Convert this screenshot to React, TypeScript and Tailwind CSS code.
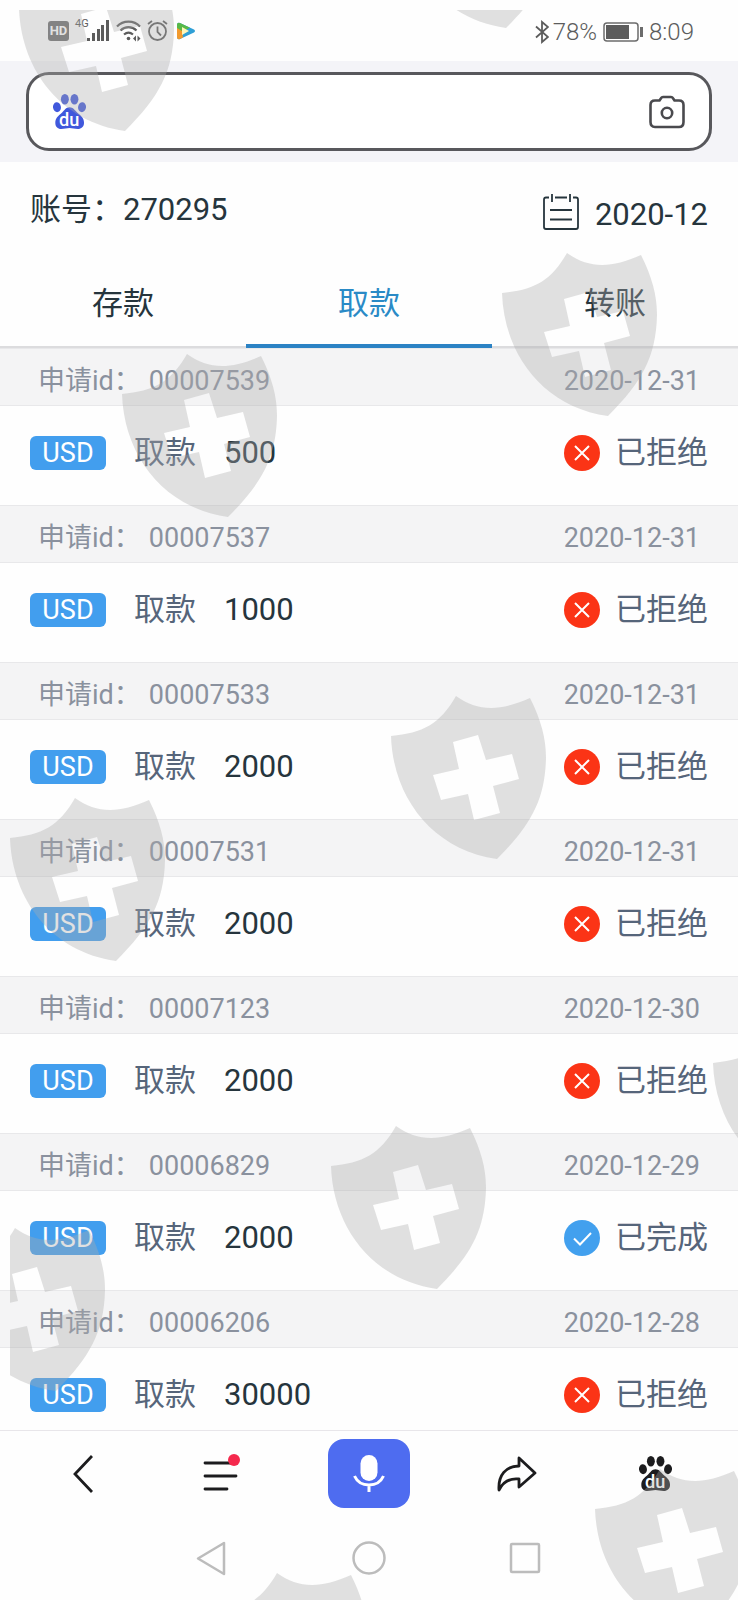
import { useState } from 'react';

type Status = 'rejected' | 'done';

type Application = {
  id: string;
  date: string;
  currency: string;
  amount: number;
  status: Status;
};

const applications: Application[] = [
  { id: '00007539', date: '2020-12-31', currency: 'USD', amount: 500, status: 'rejected' },
  { id: '00007537', date: '2020-12-31', currency: 'USD', amount: 1000, status: 'rejected' },
  { id: '00007533', date: '2020-12-31', currency: 'USD', amount: 2000, status: 'rejected' },
  { id: '00007531', date: '2020-12-31', currency: 'USD', amount: 2000, status: 'rejected' },
  { id: '00007123', date: '2020-12-30', currency: 'USD', amount: 2000, status: 'rejected' },
  { id: '00006829', date: '2020-12-29', currency: 'USD', amount: 2000, status: 'done' },
  { id: '00006206', date: '2020-12-28', currency: 'USD', amount: 30000, status: 'rejected' },
];

const tabs = ['存款', '取款', '转账'];

const shields = [
  [19, -32],
  [400, -135],
  [502, 253],
  [122, 354],
  [391, 696],
  [10, 798],
  [331, 1126],
  [713, 1023],
  [-50, 1228],
  [595, 1469],
  [212, 1573],
];

function Watermark() {
  return (
    <svg className="pointer-events-none absolute inset-0 h-full w-full" aria-hidden="true">
      <defs>
        <clipPath id="inner">
          <rect x="10" y="10" width="100%" height="100%" />
        </clipPath>
      </defs>
      <g clipPath="url(#inner)" fill="#acacac" fillOpacity="0.36" fillRule="evenodd">
        {shields.map(([x, y]) => (
          <path
            key={`${x},${y}`}
            transform={`translate(${x} ${y})`}
            d="M0 40 C32 37 49 28 65 0 C86 15 108 16 139 2 C150 24 155 42 155 62 C154 104 140 129 106 163 C42 154 2 102 0 40 Z M62 46 L68 73 L42 79 L50 104 L77 98 L83 124 L109 117 L102 90 L128 83 L121 58 L95 64 L87 39 Z"
          />
        ))}
      </g>
    </svg>
  );
}

function Paw({ className }: { className: string }) {
  return (
    <svg viewBox="0 0 100 106" className={className} fill="currentColor" aria-hidden="true">
      <ellipse cx="12" cy="40" rx="12" ry="15" transform="rotate(-8 12 40)" />
      <ellipse cx="36" cy="16" rx="12" ry="16" />
      <ellipse cx="65" cy="16" rx="12" ry="16" />
      <ellipse cx="88" cy="40" rx="12" ry="15" transform="rotate(8 88 40)" />
      <path d="M50 40 C61 40 66 49 74 57 C86 67 94 74 94 87 C94 99 86 106 75 106 C65 106 58 103 50 103 C42 103 35 106 25 106 C14 106 7 99 7 87 C7 74 15 67 27 57 C35 49 39 40 50 40 Z" />
      <text x="49" y="97" textAnchor="middle" fontFamily="Roboto" fontWeight="500" fontSize="55" fill="#fff">
        du
      </text>
    </svg>
  );
}

function StatusBar() {
  return (
    <div className="flex h-[61px] items-center justify-between pr-11 pl-12 text-[#5c5c5c]">
      <div className="flex items-center gap-1.5">
        <span className="flex h-5 w-[21px] items-center justify-center rounded-[3px] bg-[#6c6c6c] text-[13px] font-bold text-white">
          HD
        </span>
        <span className="flex">
          <span className="-mt-1 text-[11px] leading-4">4G</span>
          <svg viewBox="0 0 23 22" className="-ml-0.5 h-[22px] w-[23px]" fill="currentColor" aria-hidden="true">
            <rect x="0" y="18" width="3" height="3" />
            <rect x="5" y="13" width="3" height="8" />
            <rect x="10" y="9" width="3" height="12" />
            <rect x="14" y="5" width="3" height="16" />
            <rect x="19" y="0" width="3" height="21" />
          </svg>
        </span>
        <svg viewBox="0 0 25 22" className="h-[22px] w-[25px]" fill="none" stroke="currentColor" strokeWidth="2.200" aria-hidden="true">
          <path d="M1 6.500 C7 0 18 0 24 6.500" />
          <path d="M4.500 10.500 C9 6 16 6 20.500 10.500" />
          <path d="M8 14.500 C11 12 14 12 17 14.500" />
          <circle cx="12.500" cy="18.500" r="1.800" fill="currentColor" stroke="none" />
          <path d="M20 15.500 L17 18.500 L20 21.500 Z M21.500 15.500 L24.500 18.500 L21.500 21.500 Z" fill="currentColor" stroke="none" />
        </svg>
        <svg viewBox="0 0 21 21" className="h-[21px] w-[21px]" fill="none" stroke="currentColor" strokeWidth="1.800" aria-hidden="true">
          <circle cx="10.500" cy="11.500" r="8.500" />
          <path d="M10.500 6.500 V12 L14 15.500 M1 4 L5 1 M20 4 L16 1" />
        </svg>
        <svg viewBox="0 0 20 18" className="ml-0.5 h-[18px] w-5" aria-hidden="true">
          <path d="M1 3 Q1 0 4 1 L18 7.500 Q20 9 18 10.500 L4 17 Q1 18 1 15 Z" fill="#2f9fd6" />
          <path d="M1 3 Q1 0 4 1 L14 5.700 L7 9 L1 10 Z" fill="#58b947" />
          <path d="M1 6 L6 9 L7 15.500 L4 17 Q1 18 1 15 Z" fill="#f29a2e" />
          <path d="M6 5 L13 9 L6 13 Z" fill="#fff6b8" />
        </svg>
      </div>
      <div className="flex items-center pt-0.5 text-2xl font-light">
        <svg viewBox="0 0 14 24" className="mr-1 h-6 w-[14px]" fill="none" stroke="currentColor" strokeWidth="1.800" aria-hidden="true">
          <path d="M1 6.500 L13 17 L7 22 V2 L13 7 L1 17.500" />
        </svg>
        <span>78%</span>
        <svg viewBox="0 0 40 20" className="mx-1.5 h-5 w-10" aria-hidden="true">
          <rect x="1" y="1" width="34" height="18" rx="3" fill="#fff" stroke="#6c6c6c" strokeWidth="1.500" />
          <rect x="3" y="3" width="23" height="14" fill="#5c5c5c" />
          <rect x="37" y="5" width="3" height="10" fill="#6c6c6c" />
        </svg>
        <span>8:09</span>
      </div>
    </div>
  );
}

function SearchBar() {
  return (
    <div className="bg-[#f4f4f8] px-[26px] py-[11px]">
      <div className="flex h-[79px] items-center rounded-[23px] border-[3px] border-[#58585c] bg-white px-6">
        <Paw className="h-[35px] w-[33px] text-[#4058dc]" />
        <input type="text" aria-label="搜索" className="mx-4 h-full min-w-0 flex-1 text-[27px] outline-none" />
        <button aria-label="拍照">
          <svg viewBox="0 0 36 34" className="h-[34px] w-9" fill="none" stroke="#4a4a4e" strokeWidth="2.600" strokeLinejoin="round" aria-hidden="true">
            <path d="M10.500 5.500 L12 3.200 Q12.700 2 14 2 H22 Q23.300 2 24 3.200 L25.500 5.500 H30 Q34.500 5.500 34.500 10 V27 Q34.500 32 30 32 H6 Q1.500 32 1.500 27 V10 Q1.500 5.500 6 5.500 Z" />
            <circle cx="18" cy="18" r="5.200" />
          </svg>
        </button>
      </div>
    </div>
  );
}

function StatusIcon({ status }: { status: Status }) {
  const done = status === 'done';
  return (
    <svg viewBox="0 0 36 36" className="h-9 w-9" fill="none" stroke="#fff" strokeWidth="2" aria-hidden="true">
      <circle cx="18" cy="18" r="18" fill={done ? '#42a0ee' : '#fb3416'} stroke="none" />
      <path d={done ? 'M10 18.500 L16 24.500 L27 13' : 'M11 11 L25 25 M25 11 L11 25'} />
    </svg>
  );
}

function ApplicationItem({ item }: { item: Application }) {
  return (
    <li>
      <div className="flex h-[58px] items-center justify-between border-y border-[#e8e8ea] bg-[#f4f4f5] px-[38px] pt-2 text-[27px] text-[#8a919e]">
        <div className="flex gap-2">
          <span>申请id：</span>
          <span>{item.id}</span>
        </div>
        <time>{item.date}</time>
      </div>
      <div className="flex h-[99px] items-center justify-between px-[30px] pb-[5px] text-[31px]">
        <div className="flex items-center">
          <span className="mr-7 flex h-[34px] w-[76px] items-center justify-center rounded-md bg-[#429eee] text-[27px] text-white">
            {item.currency}
          </span>
          <span className="mr-7 text-[#56657a]">取款</span>
          <span className="text-[#26353d]">{item.amount}</span>
        </div>
        <div className="flex items-center gap-[15px] text-[#56657a]">
          <StatusIcon status={item.status} />
          <span>{item.status === 'done' ? '已完成' : '已拒绝'}</span>
        </div>
      </div>
    </li>
  );
}

function BottomBar() {
  return (
    <div className="flex items-center justify-between border-t border-[#e8e6ea] px-13 py-2 text-[#1c1c1e]">
      <button aria-label="返回" className="flex w-[62px] justify-center">
        <svg viewBox="0 0 20 38" className="h-[38px] w-5" fill="none" stroke="currentColor" strokeWidth="2.800" aria-hidden="true">
          <path d="M19 1 L2 19 L19 37" />
        </svg>
      </button>
      <button aria-label="菜单" className="flex w-[82px] justify-center">
        <svg viewBox="0 0 38 40" className="h-10 w-[38px]" aria-hidden="true">
          <path d="M3 9 H32 M3 22 H34 M3 35 H25" stroke="currentColor" strokeWidth="2.800" strokeLinecap="round" />
          <circle cx="32" cy="6" r="6" fill="#f5294d" />
        </svg>
      </button>
      <button aria-label="语音" className="flex h-[69px] w-[82px] items-center justify-center rounded-2xl bg-[#4e6cf0]">
        <svg viewBox="0 0 32 38" className="h-[38px] w-8" fill="none" stroke="#fff" strokeWidth="3" aria-hidden="true">
          <rect x="7.500" y="0" width="17" height="26" rx="8.500" fill="#fff" stroke="none" />
          <path d="M1.500 21 C7 33 25 33 30.500 21 M16 30 V37" />
        </svg>
      </button>
      <button aria-label="分享" className="flex w-[82px] justify-center">
        <svg viewBox="0 0 40 36" className="h-9 w-10" fill="none" stroke="currentColor" strokeWidth="2.800" strokeLinejoin="round" aria-hidden="true">
          <path d="M22 2 L38 17 L22 31 V23 C13 22 6 26 2 34 C1 19 9 10 22 10 Z" />
        </svg>
      </button>
      <button aria-label="主页" className="flex w-[62px] justify-center">
        <Paw className="h-[35px] w-[33px]" />
      </button>
    </div>
  );
}

function SystemNav() {
  return (
    <div className="flex h-[84px] items-center justify-center gap-[120px] text-[#bcbcbc]">
      <button aria-label="系统返回">
        <svg viewBox="0 0 36 36" className="h-9 w-9" fill="none" stroke="currentColor" strokeWidth="2.500" strokeLinejoin="round" aria-hidden="true">
          <path d="M29 3 V34 L3 18.500 Z" />
        </svg>
      </button>
      <button aria-label="桌面">
        <svg viewBox="0 0 36 36" className="h-9 w-9" fill="none" stroke="currentColor" strokeWidth="2.500" aria-hidden="true">
          <circle cx="18" cy="18" r="15.500" />
        </svg>
      </button>
      <button aria-label="最近任务">
        <svg viewBox="0 0 36 36" className="h-9 w-9" fill="none" stroke="currentColor" strokeWidth="2.500" strokeLinejoin="round" aria-hidden="true">
          <rect x="4" y="4" width="28" height="28" rx="1" />
        </svg>
      </button>
    </div>
  );
}

export default function App() {
  const [activeTab, setActiveTab] = useState('取款');

  return (
    <div className="relative flex h-screen flex-col overflow-hidden bg-[#fefefe] font-['Roboto','Noto_Sans_CJK_SC',sans-serif]">
      <StatusBar />
      <SearchBar />
      <div className="flex items-start justify-between px-[30px] pt-6 text-[31px] text-[#26353d]">
        <h1 className="leading-[48px]">账号：270295</h1>
        <button className="flex items-center gap-4 leading-[58px]">
          <svg viewBox="0 0 36 44" className="h-11 w-9" fill="none" stroke="currentColor" strokeWidth="1.800" aria-hidden="true">
            <path d="M6 4.500 H3 Q1 4.500 1 6.500 V34 Q1 36 3 36 H33 Q35 36 35 34 V6.500 Q35 4.500 33 4.500 H30 M12 4.500 H24 M9 1 V9 M27 1 V9 M7 17 H29 M7 26.500 H29" />
          </svg>
          2020-12
        </button>
      </div>
      <nav className="flex text-[31px] leading-10">
        {tabs.map((tab) => (
          <button
            key={tab}
            onClick={() => setActiveTab(tab)}
            className={
              tab === activeTab
                ? 'flex-1 border-b-4 border-[#2b82c4] pt-10 pb-5 text-[#2a8ac6]'
                : 'flex-1 border-b-2 border-[#dcdcde] pt-10 pb-[22px] text-[#26353d]'
            }
          >
            {tab}
          </button>
        ))}
      </nav>
      <ul className="min-h-0 flex-1 overflow-hidden">
        {applications.map((item) => (
          <ApplicationItem key={item.id} item={item} />
        ))}
      </ul>
      <BottomBar />
      <SystemNav />
      <Watermark />
    </div>
  );
}
